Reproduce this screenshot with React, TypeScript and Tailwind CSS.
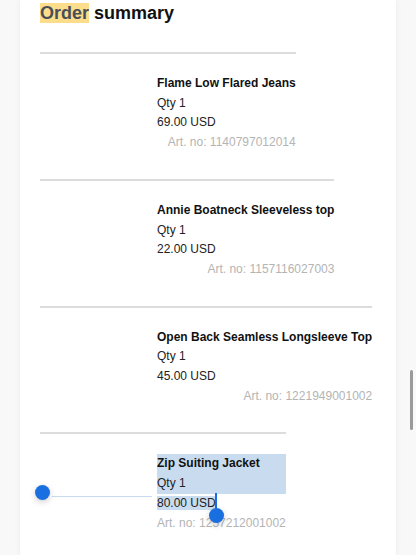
const ITEMS = [
  { name: "Flame Low Flared Jeans", qty: 1, price: "69.00 USD", art: "1140797012014" },
  { name: "Annie Boatneck Sleeveless top", qty: 1, price: "22.00 USD", art: "1157116027003" },
  { name: "Open Back Seamless Longsleeve Top", qty: 1, price: "45.00 USD", art: "1221949001002" },
  { name: "Zip Suiting Jacket", qty: 1, price: "80.00 USD", art: "1257212001002" },
];

function Item({ item, selected }: { item: (typeof ITEMS)[number]; selected?: boolean }) {
  return (
    <div className="flex w-fit border-t-2 border-[#dcdcdc] pt-[20px] pb-[26px]">
      <div className="w-[117px] shrink-0" />
      <div className="relative flex flex-col whitespace-nowrap text-[12px] leading-[19.7px]">
        <div className={selected ? "bg-[#c9dcef]" : ""}>
          <div className="font-bold text-[#111]">{item.name}</div>
          <div className="text-[#222]">Qty {item.qty}</div>
        </div>
        <div className="text-[#222]">
          <span className={selected ? "bg-[#c9dcef]" : ""}>{item.price}</span>
        </div>
        <div className="text-right text-[#b4b4b4]">Art. no: {item.art}</div>
        {selected && (
          <>
            <div className="absolute left-[-105px] top-[42px] h-px w-[100px] bg-[#c9dcef]" />
            <div className="absolute left-[-122px] top-[31px] h-[15px] w-[15px] rounded-full bg-[#1a6fe0] shadow-[0_2px_6px_rgba(0,0,0,0.2)]" />
            <div className="absolute left-[58px] top-[39px] h-[18px] w-[2px] bg-[#1a6fe0]" />
            <div className="absolute left-[51.5px] top-[54px] h-[15px] w-[15px] rounded-full bg-[#1a6fe0] shadow-[0_2px_6px_rgba(0,0,0,0.2)]" />
          </>
        )}
      </div>
    </div>
  );
}

export default function App() {
  return (
    <div className="relative h-[555px] w-[416px] overflow-hidden bg-[#f8f8f8] font-['Liberation_Sans',Arial,sans-serif]">
      <div className="ml-[20px] h-full w-[376px] bg-white px-[20px] shadow-[0_0_6px_rgba(0,0,0,0.06)]">
        <h1 className="pt-px text-[18px] font-bold leading-6 text-[#111]">
          <span className="bg-[#fbdd8c] text-[#4a4f57]">Order</span> summary
        </h1>
        <div className="mt-[27px] flex flex-col">
          {ITEMS.map((it, i) => (
            <Item key={it.art} item={it} selected={i === 3} />
          ))}
        </div>
      </div>
      <div className="absolute left-[410px] top-[370px] h-[60px] w-[3px] rounded-full bg-[#9a9a9a]" />
    </div>
  );
}
